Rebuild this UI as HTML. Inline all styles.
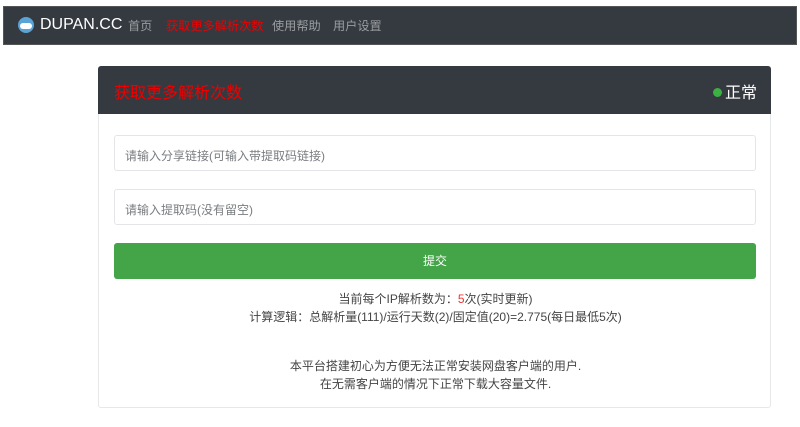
<!DOCTYPE html>
<html><head><meta charset="utf-8"><style>
*{box-sizing:border-box;margin:0;padding:0}
body{width:800px;height:427px;background:#fff;font-family:"Liberation Sans","Noto Sans CJK SC",sans-serif;position:relative;overflow:hidden}
.nav{position:absolute;left:3px;top:6px;width:794px;height:39px;background:#343a40;border:1px solid #555}
.logo{position:absolute;left:14px;top:10px;width:16px;height:16px;border-radius:50%;background:#5aa3d6}
.logo:after{content:"";position:absolute;left:2px;top:6px;width:12px;height:6px;background:#fff;border-radius:3px}
.brand{position:absolute;left:36px;top:9px;color:#fff;font-size:16px}
.nl{position:absolute;top:9px;font-size:12.2px;color:#9a9da0}
.card{position:absolute;left:98px;top:66px;width:673px;height:342px;border:1px solid #e6e7e9;border-radius:3px}
.hd{position:absolute;left:-1px;top:-1px;width:673px;height:48px;background:#343a40;border-radius:3px 3px 0 0}
.hd .t{position:absolute;left:16px;top:13px;color:#e00;font-size:16px}
.hd .s{position:absolute;right:14px;top:13px;color:#fff;font-size:16px}
.dot{display:inline-block;width:9px;height:9px;border-radius:50%;background:#3cb043;margin-right:3px;vertical-align:1px}
.in{position:absolute;left:15px;width:642px;height:36px;border:1px solid #e3e5e8;border-radius:3px;font-size:12px;color:#7a7d80;padding:11px 10px}
.btn{position:absolute;left:15px;top:176px;width:642px;height:36px;background:#43a548;border-radius:3px;color:#fff;font-size:12px;text-align:center;line-height:36px}
.tx{position:absolute;left:0;width:673px;text-align:center;font-size:12px;color:#444;line-height:18px}
</style></head><body>
<div class="nav"><div class="logo"></div><div class="brand">DUPAN.CC</div>
<span class="nl" style="left:124px">首页</span><span class="nl" style="left:162px;color:#e00">获取更多解析次数</span><span class="nl" style="left:268px">使用帮助</span><span class="nl" style="left:329px">用户设置</span></div>
<div class="card">
<div class="hd"><span class="t">获取更多解析次数</span><span class="s"><span class="dot"></span>正常</span></div>
<div class="in" style="top:68px">请输入分享链接(可输入带提取码链接)</div>
<div class="in" style="top:122px">请输入提取码(没有留空)</div>
<div class="btn">提交</div>
<div class="tx" style="top:223px">当前每个IP解析数为：<span style="color:#e33">5</span>次(实时更新)<br>计算逻辑：总解析量(111)/运行天数(2)/固定值(20)=2.775(每日最低5次)</div>
<div class="tx" style="top:290px">本平台搭建初心为方便无法正常安装网盘客户端的用户.<br>在无需客户端的情况下正常下载大容量文件.</div>
</div>
</body></html>
